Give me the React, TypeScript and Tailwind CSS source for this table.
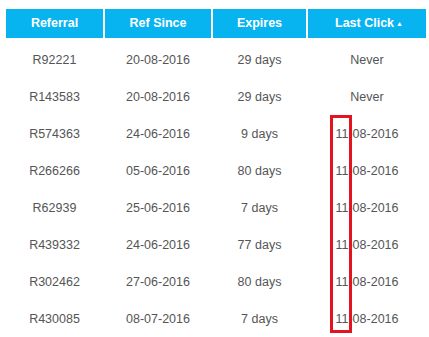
import React from "react";

const rows = [
  ["R92221", "20-08-2016", "29 days", "Never"],
  ["R143583", "20-08-2016", "29 days", "Never"],
  ["R574363", "24-06-2016", "9 days", "11-08-2016"],
  ["R266266", "05-06-2016", "80 days", "11-08-2016"],
  ["R62939", "25-06-2016", "7 days", "11-08-2016"],
  ["R439332", "24-06-2016", "77 days", "11-08-2016"],
  ["R302462", "27-06-2016", "80 days", "11-08-2016"],
  ["R430085", "08-07-2016", "7 days", "11-08-2016"],
];

const cols = "grid grid-cols-[97px_106px_93px_118px] gap-x-[2px]";

export default function App() {
  return (
    <div
      className="relative w-[429px] h-[337px] bg-white overflow-hidden"
      style={{ fontFamily: '"Liberation Sans", Arial, sans-serif' }}
    >
      <div className="pl-[6px] pt-[9px]">
        <div className={`${cols} h-[29px] text-[12.5px] font-bold text-white`}>
          <div className="bg-[#08b4f0] flex items-center justify-center pb-[1px]">Referral</div>
          <div className="bg-[#08b4f0] flex items-center justify-center pb-[1px]">Ref Since</div>
          <div className="bg-[#08b4f0] flex items-center justify-center pb-[1px]">Expires</div>
          <div className="bg-[#08b4f0] flex items-center justify-center pl-[4px] pb-[1px]">
            Last Click
            <span className="text-[7px] ml-[2px] mt-[3px]">▲</span>
          </div>
        </div>
        <div className="mt-[2px]">
          {rows.map((r, i) => (
            <div key={i} className={`${cols} h-[37px] text-[12.5px] leading-[15px] text-[#555555]`}>
              {r.map((c, j) => (
                <div key={j} className="pt-[13px] text-center">
                  {c}
                </div>
              ))}
            </div>
          ))}
        </div>
      </div>
      <div className="absolute left-[330px] top-[115px] w-[22px] h-[218px] border-[3px] border-[#e3141f]" />
    </div>
  );
}
